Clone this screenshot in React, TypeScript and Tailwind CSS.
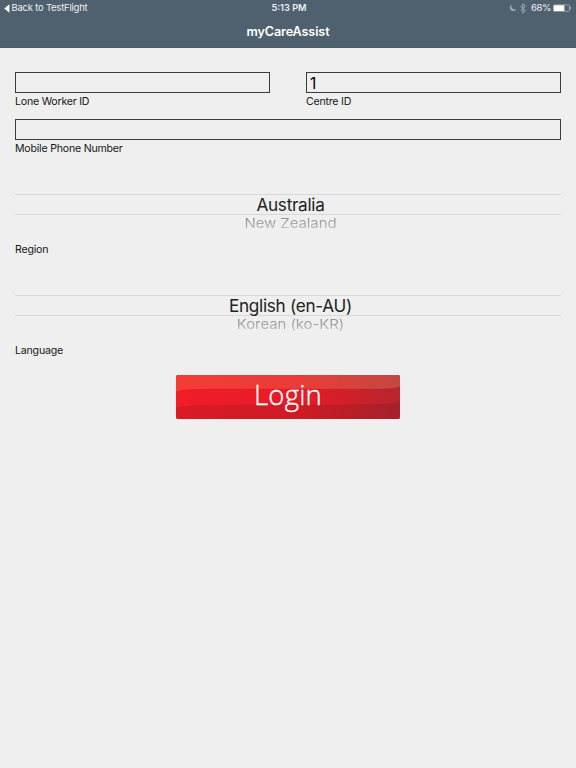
import React from 'react';

type FieldProps = { id: string; label: string; value?: string };

function Field({ id, label, value = '' }: FieldProps) {
  return (
    <div className="flex min-w-0 flex-1 flex-col">
      <input
        id={id}
        defaultValue={value}
        className="block h-[21px] w-full rounded-none border border-[#3c3c3c] bg-transparent pl-[3px] pt-px text-[15.5px] leading-[19px] text-black outline-none"
      />
      <label htmlFor={id} className="mt-[2px] h-[14px] self-start whitespace-nowrap text-[10.6px] leading-[14px] tracking-[-.22px] text-[#161616]">
        {label}
      </label>
    </div>
  );
}

type PickerProps = { label: string; selected: string; next: string };

function Picker({ label, selected, next }: PickerProps) {
  return (
    <section className="h-[101px]">
      <div className="flex h-[21px] items-center justify-center border-y border-[#d8d8d8] pl-[5px] text-[#222]">
        <span className="whitespace-nowrap text-[17.2px] leading-[19px] tracking-[-.3px]">{selected}</span>
      </div>
      <div className="flex h-[28px] justify-center pl-[5px]">
        <span className="h-[18px] origin-top scale-y-[.9] whitespace-nowrap bg-gradient-to-b from-[#858585] to-[#c8c8c8] bg-clip-text text-[15px] leading-[18px] tracking-[-.1px] text-transparent">
          {next}
        </span>
      </div>
      <div className="h-[14px] text-[10.6px] leading-[14px] tracking-[-.2px] text-[#161616]">{label}</div>
    </section>
  );
}

function StatusIcons() {
  return (
    <div className="flex items-center">
      <svg width="8" height="8" viewBox="0 0 8 8" className="mr-[3px]">
        <path d="M2.6 .6A3.5 3.5 0 1 0 7.4 5.4Q4.8 6 3.3 4.5Q1.8 2.8 2.6 .6Z" fill="#a0abb2" />
      </svg>
      <svg width="6" height="11" viewBox="0 0 6 11" className="mr-[5px]">
        <path d="M.5 3L5.3 7.8L2.9 10.3V.7L5.3 3.2L.5 8" fill="none" stroke="#a0abb2" strokeWidth="1" />
      </svg>
      <span className="mr-[2px] text-[9.6px] leading-[14px] tracking-[-.45px]">68%</span>
      <svg width="19" height="8" viewBox="0 0 19 8">
        <rect x=".4" y=".9" width="16" height="6.4" rx="1" fill="none" stroke="#aab4bb" strokeWidth=".8" />
        <rect x=".8" y="1.2" width="10.6" height="5.8" rx=".5" fill="#fff" />
        <path d="M17.2 2.5Q18.8 4 17.2 5.6Z" fill="#e4e8ea" />
      </svg>
    </div>
  );
}

export default function App() {
  return (
    <div className="h-[768px] w-[576px] overflow-hidden bg-[#efefef] font-['Inter','Liberation_Sans',sans-serif]">
      <header className="h-12 border-b border-[#485a67] bg-[#4f616e] text-[#eef0f2]">
        <div className="grid h-4 grid-cols-3 items-center pl-1 pr-[4px]">
          <div className="flex items-center gap-[1.5px] text-[9.4px] leading-[14px] tracking-[-.17px]">
            <svg width="6" height="9" viewBox="0 0 6 9"><path d="M5.4 .3V8.7L.3 4.5Z" fill="#fff" /></svg>
            <span>Back to TestFlight</span>
          </div>
          <div className="pl-[2px] text-center text-[9.2px] font-semibold leading-[14px]">5:13 PM</div>
          <div className="flex justify-end"><StatusIcons /></div>
        </div>
        <h1 className="text-center text-[12.6px] font-semibold leading-8 tracking-[-.12px] text-white">myCareAssist</h1>
      </header>
      <main className="px-[15px] pt-6">
        <div className="flex h-[47px] gap-9">
          <Field id="worker" label="Lone Worker ID" />
          <Field id="centre" label="Centre ID" value="1" />
        </div>
        <div className="flex h-[75px]">
          <Field id="phone" label="Mobile Phone Number" />
        </div>
        <Picker label="Region" selected="Australia" next="New Zealand" />
        <Picker label="Language" selected="English (en-AU)" next="Korean (ko-KR)" />
        <div className="mt-[-21px] flex justify-center">
          <button className="relative h-11 w-[224px] overflow-hidden rounded-[2px]">
            <svg width="224" height="44" viewBox="0 0 225 44" preserveAspectRatio="none" className="absolute inset-0">
              <defs>
                <linearGradient id="top"><stop stopColor="#f43c36" /><stop offset=".55" stopColor="#ea3c38" /><stop offset="1" stopColor="#c4483f" /></linearGradient>
                <linearGradient id="middle"><stop stopColor="#f11d29" /><stop offset=".55" stopColor="#e61b26" /><stop offset="1" stopColor="#b8252e" /></linearGradient>
                <linearGradient id="bottom"><stop stopColor="#d91b25" /><stop offset=".55" stopColor="#cd1b24" /><stop offset="1" stopColor="#a4222b" /></linearGradient>
              </defs>
              <rect width="225" height="44" fill="url(#middle)" />
              <path d="M0 0H225V11Q220 13.7 207 13.7H30Q5 13.7 0 17Z" fill="url(#top)" />
              <path d="M0 33Q5 30.5 30 30.2L195 29.2Q220 29 225 26V44H0Z" fill="url(#bottom)" />
            </svg>
            <span className="relative block pb-[5px] text-center font-['Open_Sans',sans-serif] text-[27.5px] font-light leading-[39px] tracking-[.2px] text-white [-webkit-text-stroke:0.35px_white]">Login</span>
          </button>
        </div>
      </main>
    </div>
  );
}
